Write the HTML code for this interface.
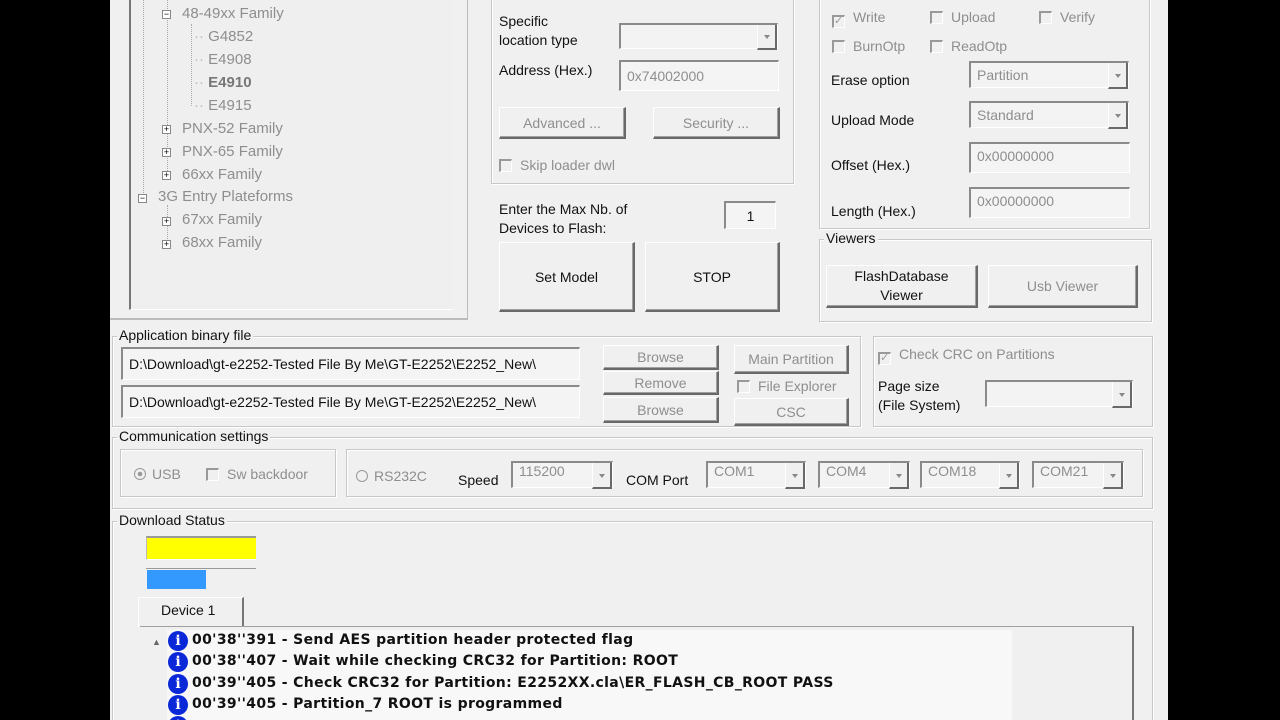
<!DOCTYPE html>
<html><head><meta charset="utf-8"><style>
*{margin:0;padding:0;box-sizing:border-box}
html,body{width:1280px;height:720px;overflow:hidden}
body{background:#000;position:relative;font-family:"Liberation Sans",Arial,sans-serif;font-size:14px;color:#111}
.app{position:absolute;left:110px;top:0;width:1058px;height:720px;background:#f0f0f0;overflow:hidden}
.a{position:absolute;white-space:nowrap}
.g{color:#8e8e8e}
.t{font-size:15px}
.grp{position:absolute;border:1px solid #c8c8c8;box-shadow:1px 1px 0 #fff inset,1px 1px 0 #fff}
.lbl{position:absolute;background:#f0f0f0;padding:0 2px;top:-10px;left:6px;font-size:14px;color:#111}
.btn{position:absolute;background:#f0f0f0;border:1px solid #fff;border-right:2px solid #696969;border-bottom:2px solid #696969;box-shadow:inset -1px -1px 0 #a0a0a0;display:flex;align-items:center;justify-content:center;text-align:center;font-size:14px}
.inp{position:absolute;background:#f4f4f4;border-top:2px solid #8a8a8a;border-left:2px solid #8a8a8a;border-right:1px solid #fff;border-bottom:1px solid #fff;padding-left:6px;font-size:14px;color:#8e8e8e;display:flex;align-items:center}
.cmb{position:absolute;background:#f3f3f3;border-top:2px solid #8a8a8a;border-left:2px solid #8a8a8a;border-right:1px solid #fff;border-bottom:1px solid #fff;padding-left:6px;font-size:14px;color:#8e8e8e}
.cmb::after{content:"";position:absolute;right:0;top:0;width:17px;height:100%;border-left:1px solid #fff;border-right:2px solid #696969;border-bottom:2px solid #696969;background:#f0f0f0}
.cmb::before{content:"";position:absolute;right:7px;top:45%;border:3px solid transparent;border-top:4px solid #888;z-index:2}
.cb{display:inline-block;width:13px;height:13px;border-top:2px solid #999;border-left:2px solid #999;border-right:1px solid #fff;border-bottom:1px solid #fff;vertical-align:-2px;margin-right:8px;background:#f0f0f0;position:relative}
.ex{position:absolute;width:9px;height:9px;border:1px solid #888;background:#fff;font-size:9px;line-height:7px;text-align:center;color:#000}
.log{font-family:"DejaVu Sans",Verdana,sans-serif;font-weight:bold;font-size:14px;letter-spacing:0.35px;color:#111}
.ic{position:absolute;width:20px;height:20px;border-radius:50%;background:#0a28d8;color:#fff;font:bold 14px "DejaVu Serif",serif;text-align:center;line-height:20px}
</style></head><body>
<div class="app">
<div style="position:absolute;left:0;top:-2px;width:358px;height:322px;border-right:1px solid #bbb;border-bottom:2px solid #bbb"></div>
<div style="position:absolute;left:19px;top:-2px;width:324px;height:312px;border-left:2px solid #777;border-bottom:1px solid #fff;background:#efefef"></div>
<div style="position:absolute;left:33px;top:0;height:195px;border-left:1px dotted #aaa"></div>
<div style="position:absolute;left:57px;top:0;height:175px;border-left:1px dotted #aaa"></div>
<div style="position:absolute;left:81px;top:24px;height:82px;border-left:1px dotted #aaa"></div>
<div style="position:absolute;left:57px;top:205px;height:38px;border-left:1px dotted #aaa"></div>
<div class="ex" style="left:52px;top:10px">−</div><div class="a g t" style="left:72px;top:5px">48-49xx Family</div>
<div class="a g t" style="left:84px;top:28px"><span style="color:#bbb">·· </span>G4852</div>
<div class="a g t" style="left:84px;top:51px"><span style="color:#bbb">·· </span>E4908</div>
<div class="a t" style="left:84px;top:74px;font-weight:bold;color:#777"><span style="font-weight:normal;color:#bbb">·· </span>E4910</div>
<div class="a g t" style="left:84px;top:97px"><span style="color:#bbb">·· </span>E4915</div>
<div class="ex" style="left:52px;top:125px">+</div><div class="a g t" style="left:72px;top:120px">PNX-52 Family</div>
<div class="ex" style="left:52px;top:148px">+</div><div class="a g t" style="left:72px;top:143px">PNX-65 Family</div>
<div class="ex" style="left:52px;top:171px">+</div><div class="a g t" style="left:72px;top:166px">66xx Family</div>
<div class="ex" style="left:28px;top:194px">−</div><div class="a g t" style="left:48px;top:188px">3G Entry Plateforms</div>
<div class="ex" style="left:52px;top:217px">+</div><div class="a g t" style="left:72px;top:211px">67xx Family</div>
<div class="ex" style="left:52px;top:240px">+</div><div class="a g t" style="left:72px;top:234px">68xx Family</div>

<div class="grp" style="left:381px;top:-5px;width:303px;height:189px"></div>
<div class="a" style="left:389px;top:12px;line-height:19px">Specific<br>location type</div>
<div class="cmb" style="left:509px;top:23px;width:159px;height:26px"></div>
<div class="a" style="left:389px;top:62px">Address (Hex.)</div>
<div class="inp" style="left:509px;top:60px;width:160px;height:31px">0x74002000</div>
<div class="btn g" style="left:389px;top:107px;width:127px;height:32px">Advanced ...</div>
<div class="btn g" style="left:543px;top:107px;width:127px;height:32px">Security ...</div>
<div class="a g" style="left:389px;top:157px"><span class="cb"></span>Skip loader dwl</div>
<div class="a" style="left:389px;top:200px;line-height:19px">Enter the Max Nb. of<br>Devices to Flash:</div>
<div class="inp" style="left:614px;top:201px;width:52px;height:28px;justify-content:center;padding:0;color:#111">1</div>
<div class="btn" style="left:389px;top:242px;width:136px;height:70px">Set Model</div>
<div class="btn" style="left:535px;top:242px;width:135px;height:70px">STOP</div>

<div class="grp" style="left:709px;top:-5px;width:331px;height:234px"></div>
<div class="a g" style="left:722px;top:9px"><span class="cb" style="font-size:11px;line-height:9px;color:#999">✓</span>Write</div>
<div class="a g" style="left:820px;top:9px"><span class="cb"></span>Upload</div>
<div class="a g" style="left:929px;top:9px"><span class="cb"></span>Verify</div>
<div class="a g" style="left:722px;top:38px"><span class="cb"></span>BurnOtp</div>
<div class="a g" style="left:820px;top:38px"><span class="cb"></span>ReadOtp</div>
<div class="a" style="left:721px;top:72px">Erase option</div>
<div class="cmb" style="left:859px;top:61px;width:160px;height:27px;padding-top:4px">Partition</div>
<div class="a" style="left:721px;top:112px">Upload Mode</div>
<div class="cmb" style="left:859px;top:101px;width:160px;height:27px;padding-top:4px">Standard</div>
<div class="a" style="left:721px;top:157px">Offset (Hex.)</div>
<div class="inp" style="left:859px;top:142px;width:161px;height:31px;align-items:flex-start;padding-top:4px">0x00000000</div>
<div class="a" style="left:721px;top:203px">Length (Hex.)</div>
<div class="inp" style="left:859px;top:187px;width:161px;height:31px;align-items:flex-start;padding-top:4px">0x00000000</div>

<div class="grp" style="left:709px;top:239px;width:333px;height:83px"><span class="lbl" style="left:4px">Viewers</span></div>
<div class="btn" style="left:716px;top:265px;width:152px;height:43px;line-height:19px">FlashDatabase<br>Viewer</div>
<div class="btn g" style="left:878px;top:265px;width:150px;height:43px">Usb Viewer</div>

<div class="grp" style="left:2px;top:336px;width:749px;height:91px"><span class="lbl" style="left:4px">Application binary file</span></div>
<div class="inp" style="left:11px;top:347px;width:459px;height:33px;color:#111;font-size:14px;overflow:hidden">D:\Download\gt-e2252-Tested File By Me\GT-E2252\E2252_New\</div>
<div class="inp" style="left:11px;top:385px;width:459px;height:33px;color:#111;font-size:14px;overflow:hidden">D:\Download\gt-e2252-Tested File By Me\GT-E2252\E2252_New\</div>
<div class="btn g" style="left:493px;top:345px;width:116px;height:25px">Browse</div>
<div class="btn g" style="left:493px;top:371px;width:116px;height:24px">Remove</div>
<div class="btn g" style="left:493px;top:397px;width:116px;height:26px">Browse</div>
<div class="btn g" style="left:624px;top:345px;width:115px;height:29px">Main Partition</div>
<div class="a g" style="left:627px;top:378px"><span class="cb"></span>File Explorer</div>
<div class="btn g" style="left:624px;top:398px;width:115px;height:28px">CSC</div>

<div class="grp" style="left:763px;top:336px;width:280px;height:91px"></div>
<div class="a g" style="left:768px;top:346px"><span class="cb" style="font-size:11px;line-height:9px;color:#999">✓</span>Check CRC on Partitions</div>
<div class="a" style="left:768px;top:377px;line-height:19px">Page size<br>(File System)</div>
<div class="cmb" style="left:875px;top:380px;width:148px;height:27px"></div>

<div class="grp" style="left:2px;top:437px;width:1041px;height:72px"><span class="lbl" style="left:4px">Communication settings</span></div>
<div class="grp" style="left:10px;top:449px;width:216px;height:48px"></div>
<div class="a g" style="left:24px;top:466px"><span style="display:inline-block;width:12px;height:12px;border:1px solid #999;border-radius:50%;vertical-align:-1px;margin-right:6px;background:radial-gradient(#999 30%,transparent 35%)"></span>USB</div>
<div class="a g" style="left:96px;top:466px"><span class="cb"></span>Sw backdoor</div>
<div class="grp" style="left:236px;top:449px;width:797px;height:48px"></div>
<div class="a g" style="left:246px;top:468px"><span style="display:inline-block;width:12px;height:12px;border:1px solid #999;border-radius:50%;vertical-align:-1px;margin-right:6px"></span>RS232C</div>
<div class="a" style="left:348px;top:472px">Speed</div>
<div class="cmb" style="left:401px;top:461px;width:102px;height:27px">115200</div>
<div class="a" style="left:516px;top:472px">COM Port</div>
<div class="cmb" style="left:596px;top:461px;width:100px;height:27px">COM1</div>
<div class="cmb" style="left:708px;top:461px;width:92px;height:27px">COM4</div>
<div class="cmb" style="left:810px;top:461px;width:100px;height:27px">COM18</div>
<div class="cmb" style="left:922px;top:461px;width:92px;height:27px">COM21</div>

<div class="grp" style="left:2px;top:521px;width:1041px;height:210px"><span class="lbl" style="left:4px">Download Status</span></div>
<div style="position:absolute;left:36px;top:536px;width:110px;height:24px;background:#ffff00;border-top:2px solid #999;border-left:1px solid #bbb;border-bottom:1px solid #fff"></div>
<div style="position:absolute;left:36px;top:568px;width:110px;height:22px;border-top:1px solid #999"></div>
<div style="position:absolute;left:37px;top:570px;width:59px;height:19px;background:#3399ff"></div>
<div style="position:absolute;left:28px;top:597px;width:106px;height:30px;border-top:1px solid #fff;border-left:1px solid #fff;border-right:2px solid #777;background:#f0f0f0"></div>
<div class="a" style="left:51px;top:602px">Device 1</div>
<div style="position:absolute;left:30px;top:626px;width:994px;height:100px;background:#f0f0f0;border-top:1px solid #a0a0a0;border-right:2px solid #777"></div>
<div style="position:absolute;left:57px;top:630px;width:845px;height:95px;background:#f8f8f8"></div>
<div class="a" style="left:42px;top:637px;font-size:9px;color:#666">▲</div>
<div class="ic" style="left:58px;top:631px">i</div><div class="a log" style="left:82px;top:632px">00'38''391 - Send AES partition header protected flag</div>
<div class="ic" style="left:58px;top:652px">i</div><div class="a log" style="left:82px;top:653px">00'38''407 - Wait while checking CRC32 for Partition: ROOT</div>
<div class="ic" style="left:58px;top:674px">i</div><div class="a log" style="left:82px;top:675px">00'39''405 - Check CRC32 for Partition: E2252XX.cla\ER_FLASH_CB_ROOT PASS</div>
<div class="ic" style="left:58px;top:695px">i</div><div class="a log" style="left:82px;top:696px">00'39''405 - Partition_7 ROOT is programmed</div>
<div class="ic" style="left:58px;top:716px">i</div>
</div>
</body></html>
